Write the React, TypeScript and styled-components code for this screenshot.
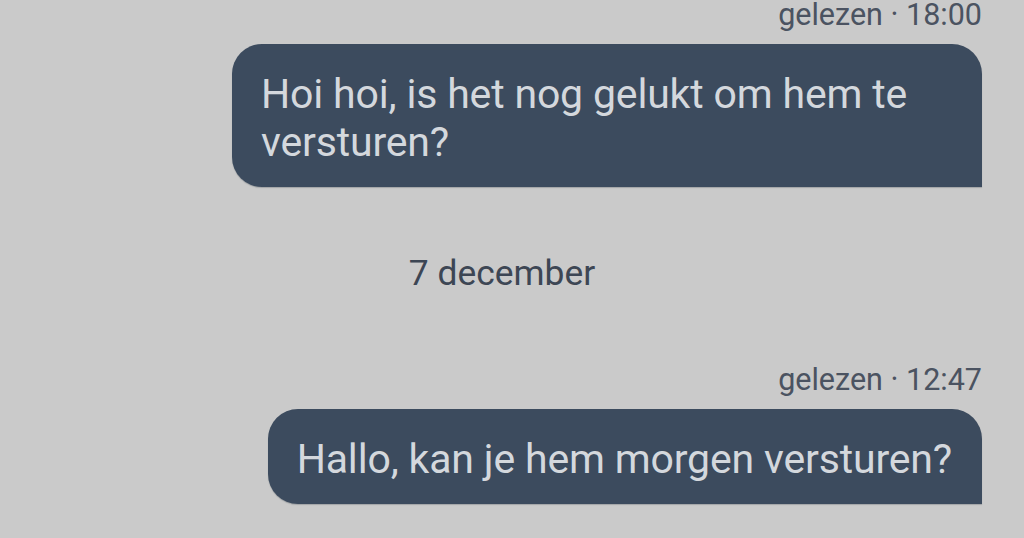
import React from "react";
import styled, { createGlobalStyle } from "styled-components";

const GlobalStyle = createGlobalStyle`
  html, body {
    margin: 0;
    padding: 0;
    background: #cacaca;
  }
  body {
    font-family: Roboto, "Noto Sans", "Liberation Sans", sans-serif;
    -webkit-font-smoothing: antialiased;
  }
`;

const Screen = styled.main`
  width: 1024px;
  height: 538px;
  overflow: hidden;
  background: #cacaca;
  box-sizing: border-box;
  padding: 0 42px 0 0;
  display: flex;
  flex-direction: column;
`;

const MessageGroup = styled.section<{ $top: number }>`
  display: flex;
  flex-direction: column;
  align-items: flex-end;
  gap: 14px;
  margin-top: ${(p) => p.$top}px;
`;

const Meta = styled.div`
  font-size: 30.5px;
  line-height: 30px;
  padding-top: 1px;
  margin-top: -1px;
  color: #4b5361;
  white-space: nowrap;
`;

const Bubble = styled.div`
  max-width: 750px;
  box-sizing: border-box;
  padding: 26px 30px 21px 29px;
  background: #3c4b5e;
  color: #d4d8dd;
  font-size: 41px;
  letter-spacing: -0.17px;
  line-height: 48px;
  border-radius: 30px 30px 0 30px;
  box-shadow: 0 1px 1px rgba(40, 50, 60, 0.25);
`;

const DateDivider = styled.div`
  margin-top: 66px;
  padding-left: 22px;
  text-align: center;
  font-size: 35.4px;
  line-height: 40px;
  color: #3d4654;
`;

export default function App() {
  return (
    <>
      <GlobalStyle />
      <Screen>
        <MessageGroup $top={0}>
          <Meta>gelezen · 18:00</Meta>
          <Bubble>Hoi hoi, is het nog gelukt om hem te versturen?</Bubble>
        </MessageGroup>
        <DateDivider>7 december</DateDivider>
        <MessageGroup $top={72}>
          <Meta>gelezen · 12:47</Meta>
          <Bubble>Hallo, kan je hem morgen versturen?</Bubble>
        </MessageGroup>
      </Screen>
    </>
  );
}
